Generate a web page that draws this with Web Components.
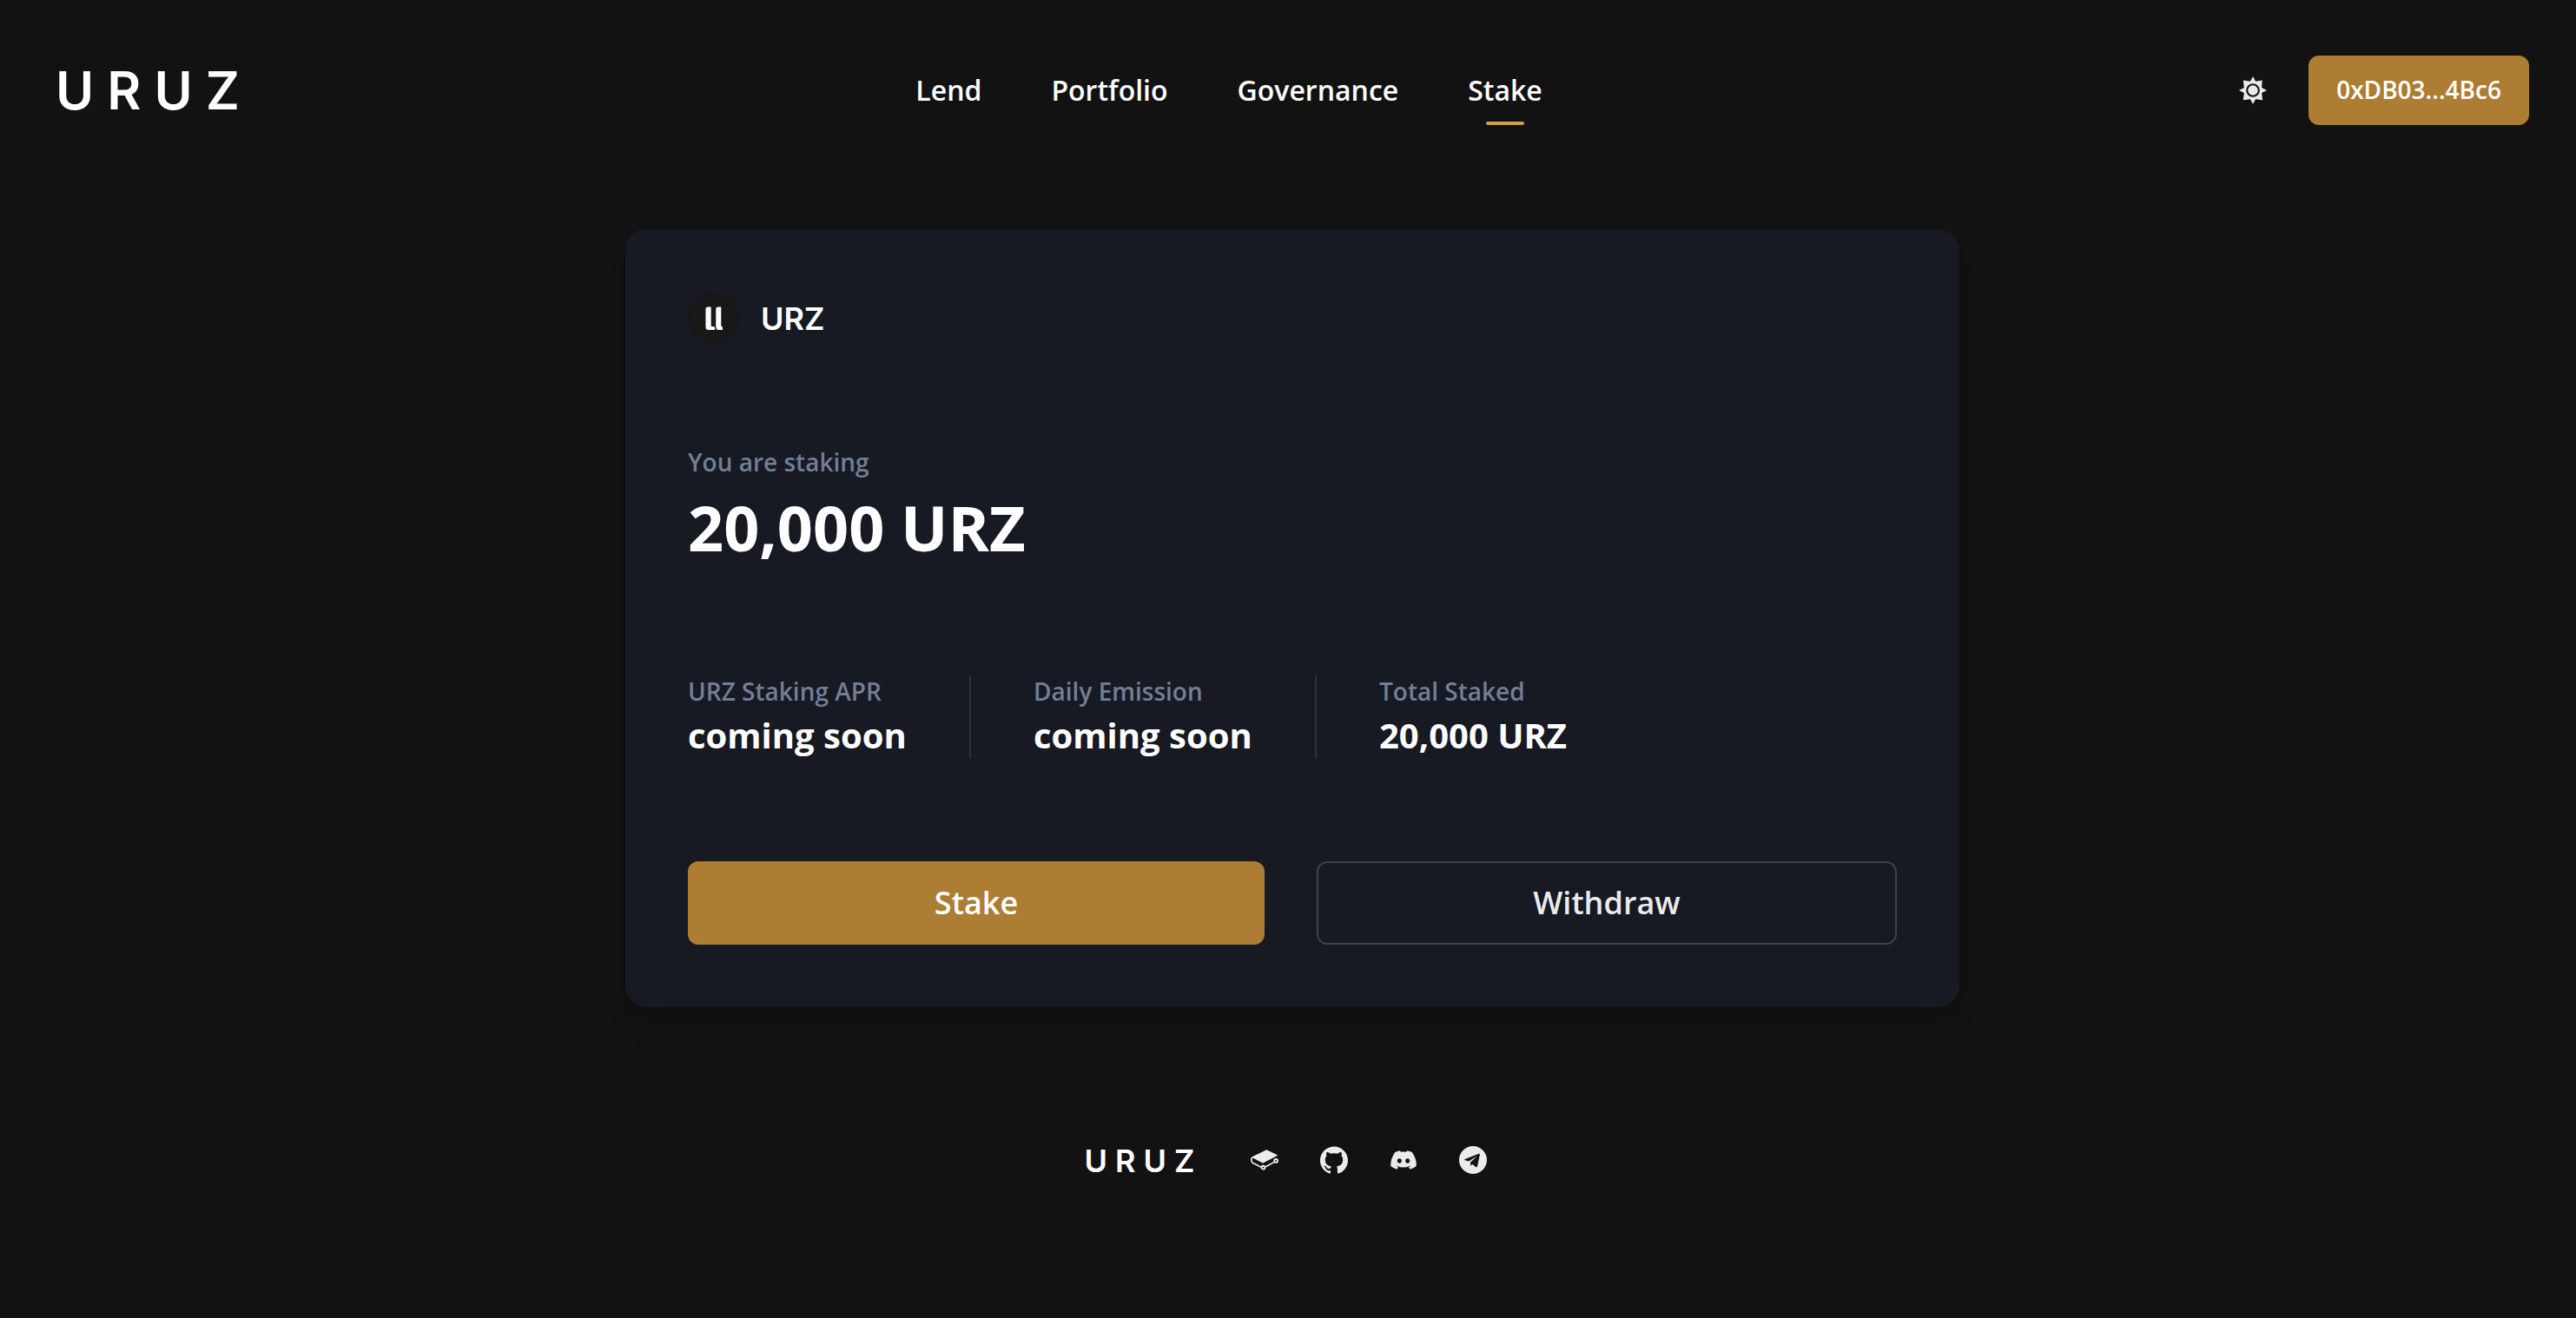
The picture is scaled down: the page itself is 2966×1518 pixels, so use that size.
<!DOCTYPE html>
<html lang="en">
<head>
<meta charset="utf-8">
<meta name="viewport" content="width=device-width, initial-scale=1">
<title>URUZ Stake</title>
<style>
  html { background: #121212; }
  body {
    margin: 0;
    color: #fff;
    font-family: "Open Sans", "Noto Sans", sans-serif;
    font-weight: 600;
    --gold: #ad7d34;
    --accent: #d19f48;
    --muted: #718096;
    --soft: #ebebeb;
    --card: #171923;
    --line: #303139;
  }
</style>
</head>
<body>
<uruz-app></uruz-app>

<script>
class BaseElement extends HTMLElement {
  connectedCallback() {
    if (this.shadowRoot) return;
    this.attachShadow({ mode: "open" }).innerHTML = this.render();
  }
}

const glyphs = {
  sun: `<circle cx="12" cy="12" r="4.300"/>
    <path fill-rule="evenodd" d="M12 0 14.3 4.4 20 3.400 19.6 9.7 24 12 19.6 14.3 20.400 20.4 14.3 19.6 12 24 9.7 19.6 3.6 20.4 4.4 14.3 0 12 4.4 9.7 3.6 3.4 9.7 4.4zM12 6.1a5.9 5.9 0 1 0 0 11.8 5.9 5.9 0 0 0 0-11.8z"/>`,
  book: `<path d="M10.802 17.77a.703.703 0 1 1-.002 1.406.703.703 0 0 1 .002-1.406m11.024-4.347a.703.703 0 1 1 .001-1.406.703.703 0 0 1-.001 1.406m0-2.876a2.176 2.176 0 0 0-2.174 2.174c0 .233.039.465.115.691l-7.181 3.823a2.165 2.165 0 0 0-1.784-.937c-.829 0-1.584.475-1.95 1.216l-6.451-3.402c-.682-.358-1.192-1.48-1.138-2.502.028-.533.212-.947.493-1.107.178-.1.392-.092.62.027l.042.023c1.71.9 7.304 3.847 7.54 3.956.363.169.565.237 1.185-.057l11.564-6.014c.17-.064.368-.227.368-.474 0-.342-.354-.477-.355-.477-.658-.315-1.669-.788-2.655-1.25-2.108-.987-4.497-2.105-5.546-2.655-.906-.474-1.635-.074-1.765.006l-.252.125C7.78 6.048 1.46 9.178 1.1 9.397.457 9.789.058 10.57.006 11.539c-.08 1.537.703 3.14 1.824 3.727l6.822 3.518a2.175 2.175 0 0 0 2.15 1.862 2.177 2.177 0 0 0 2.173-2.14l7.514-4.073c.38.298.853.461 1.337.461A2.176 2.176 0 0 0 24 12.72a2.176 2.176 0 0 0-2.174-2.174"/>`,
  github: `<path d="M12 .297c-6.63 0-12 5.373-12 12 0 5.303 3.438 9.8 8.205 11.385.6.113.82-.258.82-.577 0-.285-.01-1.04-.015-2.04-3.338.724-4.042-1.61-4.042-1.61C4.422 18.07 3.633 17.7 3.633 17.7c-1.087-.744.084-.729.084-.729 1.205.084 1.838 1.236 1.838 1.236 1.07 1.835 2.809 1.305 3.495.998.108-.776.417-1.305.76-1.605-2.665-.3-5.466-1.332-5.466-5.93 0-1.31.465-2.38 1.235-3.22-.135-.303-.54-1.523.105-3.176 0 0 1.005-.322 3.3 1.23.96-.267 1.98-.399 3-.405 1.02.006 2.04.138 3 .405 2.28-1.552 3.285-1.23 3.285-1.23.645 1.653.24 2.873.12 3.176.765.84 1.23 1.91 1.23 3.22 0 4.61-2.805 5.625-5.475 5.92.42.36.81 1.096.81 2.22 0 1.606-.015 2.896-.015 3.286 0 .315.21.69.825.57C20.565 22.092 24 17.592 24 12.297c0-6.627-5.373-12-12-12"/>`,
  discord: `<path d="M19.3 5.3A16.9 16.9 0 0 0 15 4l-.6 1.1a15.700 15.700 0 0 0-4.8 0L9 4a17 17 0 0 0-4.300 1.300C2 9.400 .6 13.400 1 17.400A17.200 17.200 0 0 0 6.300 20l1.300-1.800a11 11 0 0 1-1.700-.8l.4-.4a13 13 0 0 0 11.400 0l.4.4a11 11 0 0 1-1.700.8L17.700 20a17.100 17.100 0 0 0 5.300-2.600c.5-4.700-1.300-8.700-3.700-12.100zM8.500 14.900c-1 0-1.900-1-1.900-2.100s.8-2.100 1.900-2.100 1.900 1 1.900 2.100-.8 2.100-1.900 2.100zm7 0c-1 0-1.900-1-1.900-2.100s.8-2.100 1.900-2.100 1.900 1 1.900 2.100-.8 2.100-1.900 2.100z"/>`,
  telegram: `<path fill-rule="evenodd" d="M12 0a12 12 0 1 0 0 24 12 12 0 0 0 0-24zM17.900 7.300 15.800 17.500c-.1.700-.6.900-1.200.6l-3.300-2.500-1.300 1.700-.3-3.300 6.100-5.600-7.500 4.800-3.200-1c-.7-.2-.7-.7.100-1L17 6.600c.6-.2 1.100.1.900.7z"/>`
};

customElements.define("uruz-icon", class extends BaseElement {
  render() {
    return `<style>
      :host { display: block; width: 32px; height: 32px; color: var(--soft); }
      svg { display: block; width: 100%; height: 100%; fill: currentColor; }
    </style><svg viewBox="0 0 24 24" aria-hidden="true">${glyphs[this.getAttribute("name")]}</svg>`;
  }
});

customElements.define("uruz-wordmark", class extends BaseElement {
  render() {
    return `<style>
      :host { display: block; padding-top: 2px; font: 600 36px/40px Inter, sans-serif; white-space: nowrap; }
      :host([size="large"]) { padding-top: 0; font-size: 60px; line-height: 64px; }
    </style><slot></slot>`;
  }
});

customElements.define("uruz-nav-link", class extends BaseElement {
  render() {
    const active = this.hasAttribute("active");
    return `<style>
      :host { display: block; }
      a { display: block; position: relative; color: inherit; text-decoration: none; font-size: 32px; line-height: 80px; }
      a[aria-current]::after {
        content: ""; position: absolute; left: 50%; bottom: 0; width: 44px; height: 4px;
        margin-left: -22px; border-radius: 2px; background: var(--accent);
      }
    </style><a href="#" ${active ? 'aria-current="page"' : ""}><slot></slot></a>`;
  }
});

customElements.define("uruz-button", class extends BaseElement {
  render() {
    return `<style>
      :host { display: block; }
      :host([variant="outline"]) { border: 2px solid #3f4149; border-radius: 12px; }
      button {
        display: block; box-sizing: border-box; width: 100%; height: 96px; padding: 0 32px 2px; border: 0; border-radius: 12px;
        background: var(--gold); color: #fff; font: inherit; font-size: 36px; cursor: pointer;
      }
      :host([variant="outline"]) button { height: 92px; background: none; color: var(--soft); }
      :host([size="small"]) button { height: 80px; font-size: 28px; }
    </style><button type="button"><slot></slot></button>`;
  }
});

customElements.define("uruz-header", class extends BaseElement {
  render() {
    return `<style>
      :host { display: block; }
      header { display: flex; align-items: center; justify-content: space-between; padding: 64px 54px 0 64px; }
      nav { display: flex; gap: 80px; padding-right: 8px; }
      .tools { display: flex; align-items: center; gap: 32px; }
      .theme { display: block; padding: 16px; border: 0; background: none; cursor: pointer; }
    </style>
    <header>
      <uruz-wordmark size="large">U R U Z</uruz-wordmark>
      <nav aria-label="Main">
        <uruz-nav-link>Lend</uruz-nav-link>
        <uruz-nav-link>Portfolio</uruz-nav-link>
        <uruz-nav-link>Governance</uruz-nav-link>
        <uruz-nav-link active>Stake</uruz-nav-link>
      </nav>
      <div class="tools">
        <button class="theme" type="button" aria-label="Toggle theme"><uruz-icon name="sun"></uruz-icon></button>
        <uruz-button size="small">0xDB03...4Bc6</uruz-button>
      </div>
    </header>`;
  }
});

customElements.define("uruz-stat", class extends BaseElement {
  render() {
    return `<style>
      :host { display: flex; flex-direction: column; gap: 6px; }
      :host([size="large"]) { gap: 4px; }
      .label { color: var(--muted); font-size: 28px; line-height: 36px; }
      .value { font-size: 40px; line-height: 54px; font-weight: 700; }
      :host([size="large"]) .value { font-size: 72px; line-height: 106px; }
    </style>
    <div class="label">${this.getAttribute("label")}</div>
    <div class="value"><slot></slot></div>`;
  }
});

customElements.define("uruz-stake-card", class extends BaseElement {
  render() {
    return `<style>
      :host {
        display: flex; flex-direction: column; gap: 118px; box-sizing: border-box;
        width: 100%; max-width: 1536px; padding: 72px; border-radius: 24px;
        background: var(--card);
        box-shadow: 0 30px 40px -10px rgba(0, 0, 0, .08), 0 10px 16px -6px rgba(0, 0, 0, .04);
      }
      .token { display: flex; align-items: center; gap: 24px; }
      .token svg { display: block; width: 60px; height: 60px; }
      .stats { display: flex; }
      .stats uruz-stat { min-width: 252px; }
      .stats uruz-stat + uruz-stat { margin-left: 72px; padding-left: 72px; border-left: 2px solid var(--line); }
      .actions { display: flex; gap: 60px; }
      .actions uruz-button { flex: 1 1 0; }
    </style>
    <div class="token">
      <svg viewBox="0 0 60 60" aria-hidden="true">
        <circle cx="30" cy="30" r="30" fill="#181818"/>
        <path fill="#fff" d="M20.500 20q0-2.500 2.500-2.500h3.700v21.500q0 1 1 1h2q1.500 0 1.500 4h-7.200q-3.500 0-3.500-3.500zM32.300 20q0-2.500 2.500-2.500h3.500v21.500q0 1 .8 1 1 0 1 4h-4.300q-3.500 0-3.500-3.500z"/>
      </svg>
      <uruz-wordmark>URZ</uruz-wordmark>
    </div>
    <uruz-stat size="large" label="You are staking">20,000 URZ</uruz-stat>
    <div class="stats">
      <uruz-stat label="URZ Staking APR">coming soon</uruz-stat>
      <uruz-stat label="Daily Emission">coming soon</uruz-stat>
      <uruz-stat label="Total Staked">20,000 URZ</uruz-stat>
    </div>
    <div class="actions">
      <uruz-button>Stake</uruz-button>
      <uruz-button variant="outline">Withdraw</uruz-button>
    </div>`;
  }
});

customElements.define("uruz-footer", class extends BaseElement {
  render() {
    return `<style>
      :host { display: block; }
      footer { display: flex; align-items: center; justify-content: center; gap: 64px; padding: 155px 6px 160px 0; }
      .links { display: flex; gap: 48px; }
      a { display: block; }
    </style>
    <footer>
      <uruz-wordmark>U R U Z</uruz-wordmark>
      <div class="links">
        <a href="#" aria-label="Docs"><uruz-icon name="book"></uruz-icon></a>
        <a href="#" aria-label="GitHub"><uruz-icon name="github"></uruz-icon></a>
        <a href="#" aria-label="Discord"><uruz-icon name="discord"></uruz-icon></a>
        <a href="#" aria-label="Telegram"><uruz-icon name="telegram"></uruz-icon></a>
      </div>
    </footer>`;
  }
});

customElements.define("uruz-app", class extends BaseElement {
  render() {
    return `<style>
      :host { display: block; }
      main { display: flex; justify-content: center; padding: 120px 0 0 10px; }
    </style>
    <uruz-header></uruz-header>
    <main><uruz-stake-card></uruz-stake-card></main>
    <uruz-footer></uruz-footer>`;
  }
});
</script>
</body>
</html>
